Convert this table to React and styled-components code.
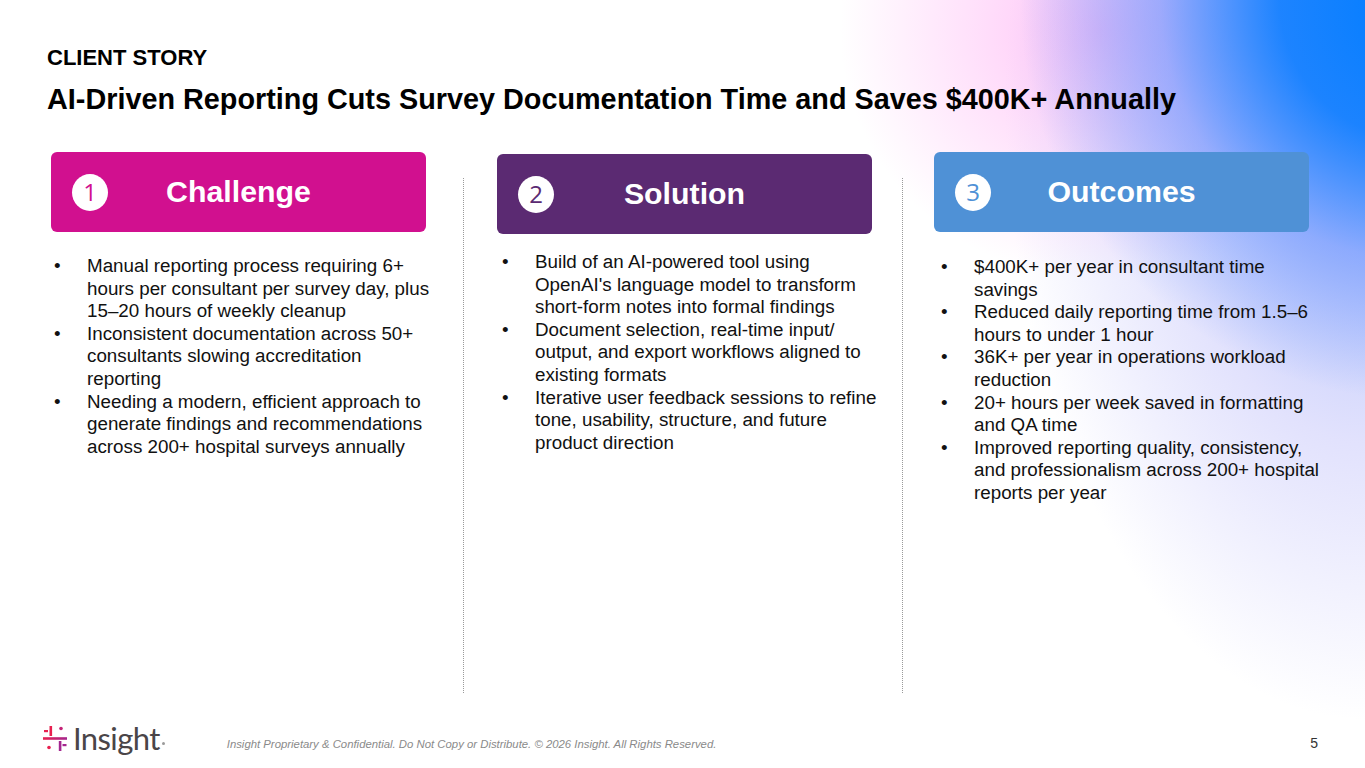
import React from 'react';
import styled, { createGlobalStyle } from 'styled-components';

const GlobalStyle = createGlobalStyle`
  html, body {
    margin: 0;
    padding: 0;
    background: #fff;
  }
  * {
    box-sizing: border-box;
  }
`;

const Slide = styled.div`
  width: 1365px;
  height: 768px;
  overflow: hidden;
  display: flex;
  flex-direction: column;
  font-family: 'Liberation Sans', Arial, sans-serif;
  color: #000;
  background:
    radial-gradient(ellipse 400px 400px at 1420px 0px, rgba(0, 125, 255, 1) 0%, rgba(20, 128, 255, 0.95) 35%, rgba(100, 145, 255, 0.55) 65%, rgba(160, 170, 255, 0) 100%),
    radial-gradient(ellipse 360px 620px at 1365px 100px, rgba(140, 165, 250, 0.8) 0%, rgba(185, 185, 250, 0.42) 55%, rgba(255, 255, 255, 0) 100%),
    radial-gradient(ellipse 260px 250px at 1100px 30px, rgba(255, 190, 245, 0.95) 0%, rgba(255, 205, 248, 0.6) 50%, rgba(255, 255, 255, 0) 100%),
    #fff;
`;

const Head = styled.header`
  padding: 44px 47px 0;
`;

const Eyebrow = styled.div`
  font-size: 22px;
  font-weight: 700;
  line-height: 28px;
`;

const Title = styled.h1`
  margin: 8px 0 0;
  font-size: 28.8px;
  font-weight: 700;
  line-height: 38px;
`;

const Columns = styled.main`
  flex: 1;
  min-height: 0;
  display: grid;
  grid-template-columns: 375px auto 375px auto 375px;
  justify-content: start;
  align-items: start;
  padding: 34px 0 0 51px;
`;

const Divider = styled.div`
  margin: 26px ${(p) => p.$after}px 0 ${(p) => p.$before}px;
  width: 0;
  height: 515px;
  border-left: 1.5px dotted #9a9a9a;
`;

const Column = styled.section`
  display: flex;
  flex-direction: column;
  padding-top: ${(p) => p.$offset || 0}px;
`;

const Banner = styled.div`
  height: 80px;
  border-radius: 6px;
  background: ${(p) => p.$color};
  display: grid;
  grid-template-columns: 1fr auto 1fr;
  align-items: center;
  padding: 0 21px;
`;

const Badge = styled.span`
  justify-self: start;
  width: 36px;
  height: 37px;
  border-radius: 50%;
  background: #fff;
  color: ${(p) => p.$color};
  display: flex;
  align-items: center;
  justify-content: center;
  font-family: 'Open Sans', 'Liberation Sans', sans-serif;
  font-size: 24px;
  line-height: 1;
`;

const BannerTitle = styled.h2`
  margin: 0;
  color: #fff;
  font-size: 30.3px;
  font-weight: 700;
`;

const List = styled.ul`
  list-style: none;
  margin: ${(p) => p.$gap}px 0 0;
  padding: 0 0 0 ${(p) => p.$indent}px;
`;

const Item = styled.li`
  display: grid;
  grid-template-columns: 33px 351px;
  font-size: 18.8px;
  line-height: 22.6px;
  color: #111;

  &::before {
    content: '•';
  }
`;

const Footer = styled.footer`
  display: flex;
  align-items: center;
  padding: 0 47px 4px 42px;
  height: 56px;
`;

const Logo = styled.div`
  display: flex;
  align-items: center;
  gap: 5px;
`;

const LogoWord = styled.span`
  font-family: Lato, 'Open Sans', sans-serif;
  font-size: 31px;
  color: #4a4548;
  letter-spacing: -0.6px;
  line-height: 1;
`;

const LogoDot = styled.span`
  width: 3px;
  height: 3px;
  border-radius: 50%;
  background: #9a9a9a;
  align-self: flex-end;
  margin: 0 0 9px -3px;
`;

const Legal = styled.span`
  margin-left: 62px;
  margin-top: 12px;
  font-size: 11.35px;
  font-style: italic;
  color: #8a8a8a;
`;

const PageNum = styled.span`
  margin-left: auto;
  margin-top: 10px;
  font-size: 14px;
  color: #333;
`;

const columns = [
  {
    n: 1,
    title: 'Challenge',
    color: '#d1108f',
    offset: 0,
    gap: 23,
    indent: 3,
    items: [
      'Manual reporting process requiring 6+ hours per consultant per survey day, plus 15–20 hours of weekly cleanup',
      'Inconsistent documentation across 50+ consultants slowing accreditation reporting',
      'Needing a modern, efficient approach to generate findings and recommendations across 200+ hospital surveys annually',
    ],
  },
  {
    n: 2,
    title: 'Solution',
    color: '#5b2a72',
    offset: 2,
    gap: 17,
    indent: 5,
    items: [
      "Build of an AI-powered tool using OpenAI's language model to transform short-form notes into formal findings",
      'Document selection, real-time input/ output, and export workflows aligned to existing formats',
      'Iterative user feedback sessions to refine tone, usability, structure, and future product direction',
    ],
  },
  {
    n: 3,
    title: 'Outcomes',
    color: '#4f91d6',
    offset: 0,
    gap: 24,
    indent: 7,
    items: [
      '$400K+ per year in consultant time savings',
      'Reduced daily reporting time from 1.5–6 hours to under 1 hour',
      '36K+ per year in operations workload reduction',
      '20+ hours per week saved in formatting and QA time',
      'Improved reporting quality, consistency, and professionalism across 200+ hospital reports per year',
    ],
  },
];

const dividers = [
  { before: 37, after: 33 },
  { before: 30, after: 31 },
];

function LogoMark() {
  return (
    <svg width="26" height="26" viewBox="0 0 26 26">
      <defs>
        <linearGradient id="lm" x1="0" y1="0" x2="1" y2="0">
          <stop offset="0" stopColor="#e8204f" />
          <stop offset="1" stopColor="#a4268f" />
        </linearGradient>
      </defs>
      <rect x="7.5" y="1" width="2.6" height="10" fill="#e8204f" />
      <rect x="2" y="5" width="4" height="2.2" fill="#e8204f" />
      <circle cx="19" cy="3.5" r="1.8" fill="#c42377" />
      <rect x="1" y="12.2" width="24" height="2.6" fill="url(#lm)" />
      <circle cx="7" cy="22.5" r="1.8" fill="#e8204f" />
      <rect x="16.8" y="16" width="2.6" height="10" fill="#a4268f" />
      <rect x="20.5" y="19" width="4" height="2.2" fill="#a4268f" />
    </svg>
  );
}

function App() {
  const cols = [];
  columns.forEach((c, i) => {
    if (i > 0) {
      const d = dividers[i - 1];
      cols.push(<Divider key={`d${i}`} $before={d.before} $after={d.after} />);
    }
    cols.push(
      <Column key={c.title} $offset={c.offset}>
        <Banner $color={c.color}>
          <Badge $color={c.color}>{c.n}</Badge>
          <BannerTitle>{c.title}</BannerTitle>
        </Banner>
        <List $gap={c.gap} $indent={c.indent}>
          {c.items.map((t) => (
            <Item key={t}>{t}</Item>
          ))}
        </List>
      </Column>
    );
  });

  return (
    <>
      <GlobalStyle />
      <Slide>
        <Head>
          <Eyebrow>CLIENT STORY</Eyebrow>
          <Title>AI-Driven Reporting Cuts Survey Documentation Time and Saves $400K+ Annually</Title>
        </Head>
        <Columns>{cols}</Columns>
        <Footer>
          <Logo>
            <LogoMark />
            <LogoWord>Insight</LogoWord>
            <LogoDot />
          </Logo>
          <Legal>Insight Proprietary &amp; Confidential. Do Not Copy or Distribute. © 2026 Insight. All Rights Reserved.</Legal>
          <PageNum>5</PageNum>
        </Footer>
      </Slide>
    </>
  );
}

export default App;
